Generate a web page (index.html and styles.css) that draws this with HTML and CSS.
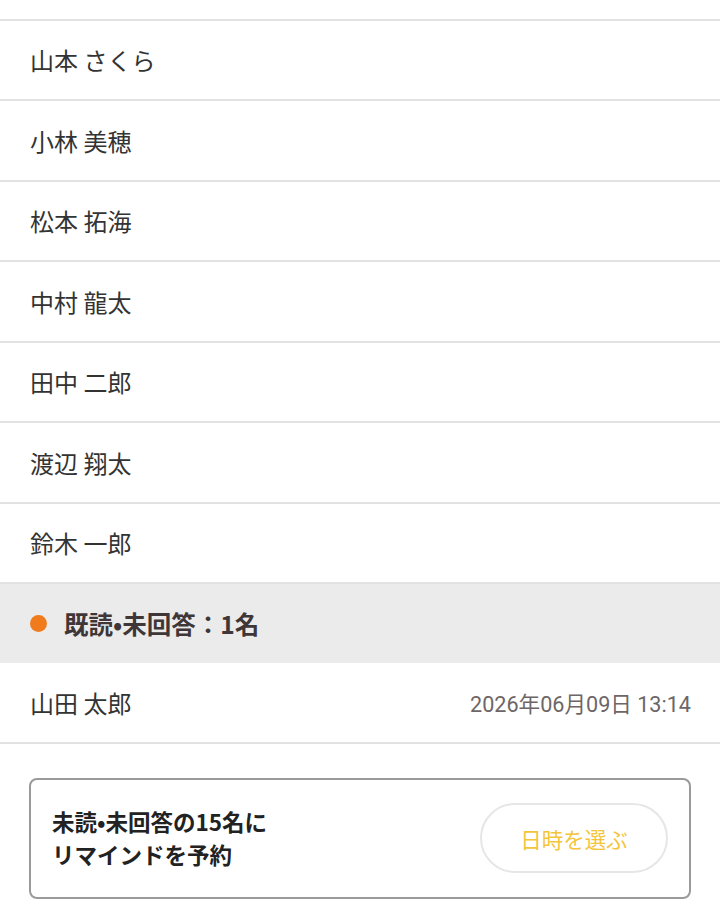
FILE: index.html
```html
<!DOCTYPE html>
<html lang="ja">
<head>
    <meta charset="UTF-8">
    <meta name="viewport" content="width=device-width, initial-scale=1.0">
    <title>回答状況</title>
    <link rel="stylesheet" href="styles.css">
</head>
<body>
    <div class="member-list">
        <div class="member member-cut"></div>
        <div class="member"><span class="name">山本 さくら</span></div>
        <div class="member"><span class="name">小林 美穂</span></div>
        <div class="member"><span class="name">松本 拓海</span></div>
        <div class="member"><span class="name">中村 龍太</span></div>
        <div class="member"><span class="name">田中 二郎</span></div>
        <div class="member"><span class="name">渡辺 翔太</span></div>
        <div class="member"><span class="name">鈴木 一郎</span></div>
    </div>

    <div class="group-header">
        <span class="dot"></span>
        <span class="group-title">既読•未回答：1名</span>
    </div>
    <div class="member-list">
        <div class="member">
            <span class="name">山田 太郎</span>
            <span class="read-at">2026年06月09日 13:14</span>
        </div>
    </div>

    <div class="remind-box">
        <p class="remind-text">未読•未回答の15名に<br>リマインドを予約</p>
        <button class="pick-date">日時を選ぶ</button>
    </div>
</body>
</html>
```

FILE: styles.css
```css
body {
    margin: 0;
    font-family: "Noto Sans CJK JP", "Noto Sans", sans-serif;
    color: #333;
    background-color: #fff;
}
.member {
    display: flex;
    align-items: center;
    justify-content: space-between;
    height: 78.5px;
    padding: 0 29px 0 30px;
    border-bottom: 2px solid #e2e2e2;
}
.member-cut {
    height: 18.5px;
}
.name {
    font-size: 24px;
    color: #333;
}
.read-at {
    font-family: Roboto, "Noto Sans CJK JP", sans-serif;
    font-size: 21.6px;
    color: #6e6666;
}
.group-header {
    display: flex;
    align-items: center;
    height: 79px;
    padding-left: 30px;
    background-color: #ebebeb;
}
.dot {
    width: 17px;
    height: 17px;
    border-radius: 50%;
    background-color: #ef7b1c;
    margin-right: 17px;
}
.group-title {
    font-size: 24.5px;
    font-weight: bold;
    color: #3f3737;
}
.remind-box {
    display: flex;
    align-items: center;
    justify-content: space-between;
    margin: 34px 29px 0;
    height: 117px;
    padding: 0 21px;
    border: 2px solid #9a9a9a;
    border-radius: 8px;
}
.remind-text {
    margin: 0;
    font-size: 22.5px;
    font-weight: bold;
    line-height: 33px;
    color: #222;
}
.pick-date {
    width: 188px;
    height: 70px;
    border: 2px solid #e6e6e6;
    border-radius: 35px;
    background-color: #fff;
    font-family: "Noto Sans CJK JP", sans-serif;
    font-size: 21.5px;
    color: #f4c53c;
}
```
